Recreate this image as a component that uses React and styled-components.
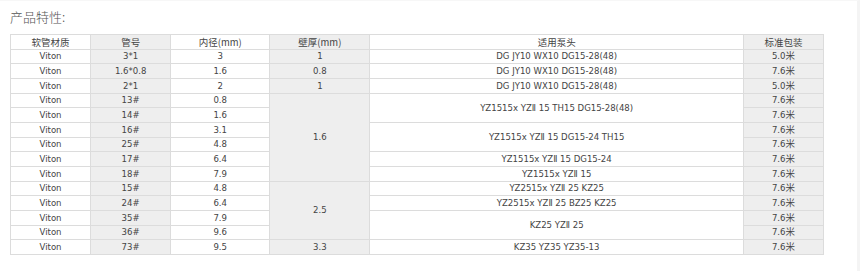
import styled, { createGlobalStyle } from 'styled-components';

const GlobalStyle = createGlobalStyle`
    html, body {
        margin: 0;
        padding: 0;
        background: #fff;
    }
`;

const Page = styled.div`
    width: 860px;
    height: 271px;
    box-sizing: border-box;
    border-right: 3px solid #f4f4f4;
    border-top: 1px solid #f7f7f7;
    padding-left: 10px;
    overflow: hidden;
`;

const Title = styled.div`
    height: 33px;
    padding-top: 6px;
    box-sizing: border-box;
    font-family: "Noto Sans CJK SC", "Noto Sans", sans-serif;
    font-size: 13px;
    line-height: 20px;
    font-weight: 300;
    color: #555;
`;

const Table = styled.table`
    border-collapse: collapse;
    table-layout: fixed;
    width: 814px;
    font-family: "DejaVu Sans Condensed", "DejaVu Sans", "Noto Sans CJK SC", sans-serif;
    font-size: 9.5px;
    color: #444;
`;

const Row = styled.tr`
    height: 14.67px;
`;

const Cell = styled.td`
    border: 1px solid #dcdcdc;
    padding: 0;
    text-align: center;
    vertical-align: middle;
    line-height: 12px;
    white-space: nowrap;
    background: ${p => (p.$shade ? '#eeeeee' : '#fff')};
`;

const HeadCell = styled(Cell).attrs({ as: 'th' })`
    font-weight: normal;
    font-family: "Noto Sans CJK SC", sans-serif;
    font-size: 9.5px;
`;

const columns = [
    { label: '软管材质', width: 80, shade: false },
    { label: '管号', width: 80, shade: true },
    { label: '内径(mm)', width: 99, shade: false },
    { label: '壁厚(mm)', width: 100, shade: true },
    { label: '适用泵头', width: 373, shade: false },
    { label: '标准包装', width: 80, shade: true },
];

// wall / pump: [text, rowSpan] or null when covered by a span above
const rows = [
    { no: '3*1', id: '3', wall: ['1', 1], pump: ['DG JY10 WX10 DG15-28(48)', 1], pack: '5.0米' },
    { no: '1.6*0.8', id: '1.6', wall: ['0.8', 1], pump: ['DG JY10 WX10 DG15-28(48)', 1], pack: '7.6米' },
    { no: '2*1', id: '2', wall: ['1', 1], pump: ['DG JY10 WX10 DG15-28(48)', 1], pack: '5.0米' },
    { no: '13#', id: '0.8', wall: ['1.6', 6], pump: ['YZ1515x YZⅡ 15 TH15 DG15-28(48)', 2], pack: '7.6米' },
    { no: '14#', id: '1.6', wall: null, pump: null, pack: '7.6米' },
    { no: '16#', id: '3.1', wall: null, pump: ['YZ1515x YZⅡ 15 DG15-24 TH15', 2], pack: '7.6米' },
    { no: '25#', id: '4.8', wall: null, pump: null, pack: '7.6米' },
    { no: '17#', id: '6.4', wall: null, pump: ['YZ1515x YZⅡ 15 DG15-24', 1], pack: '7.6米' },
    { no: '18#', id: '7.9', wall: null, pump: ['YZ1515x YZⅡ 15', 1], pack: '7.6米' },
    { no: '15#', id: '4.8', wall: ['2.5', 4], pump: ['YZ2515x YZⅡ 25 KZ25', 1], pack: '7.6米' },
    { no: '24#', id: '6.4', wall: null, pump: ['YZ2515x YZⅡ 25 BZ25 KZ25', 1], pack: '7.6米' },
    { no: '35#', id: '7.9', wall: null, pump: ['KZ25 YZⅡ 25', 2], pack: '7.6米' },
    { no: '36#', id: '9.6', wall: null, pump: null, pack: '7.6米' },
    { no: '73#', id: '9.5', wall: ['3.3', 1], pump: ['KZ35 YZ35 YZ35-13', 1], pack: '7.6米' },
];

const App = () => {
    return (
        <>
            <GlobalStyle />
            <Page>
                <Title>产品特性:</Title>
                <Table>
                    <colgroup>
                        {columns.map(c => <col key={c.label} style={{ width: c.width }} />)}
                    </colgroup>
                    <thead>
                        <Row>
                            {columns.map(c => (
                                <HeadCell key={c.label} $shade={c.shade}>{c.label}</HeadCell>
                            ))}
                        </Row>
                    </thead>
                    <tbody>
                        {rows.map((r, i) => (
                            <Row key={i}>
                                <Cell>Viton</Cell>
                                <Cell $shade>{r.no}</Cell>
                                <Cell>{r.id}</Cell>
                                {r.wall && <Cell $shade rowSpan={r.wall[1]}>{r.wall[0]}</Cell>}
                                {r.pump && <Cell rowSpan={r.pump[1]}>{r.pump[0]}</Cell>}
                                <Cell $shade>{r.pack}</Cell>
                            </Row>
                        ))}
                    </tbody>
                </Table>
            </Page>
        </>
    );
};

export default App;
